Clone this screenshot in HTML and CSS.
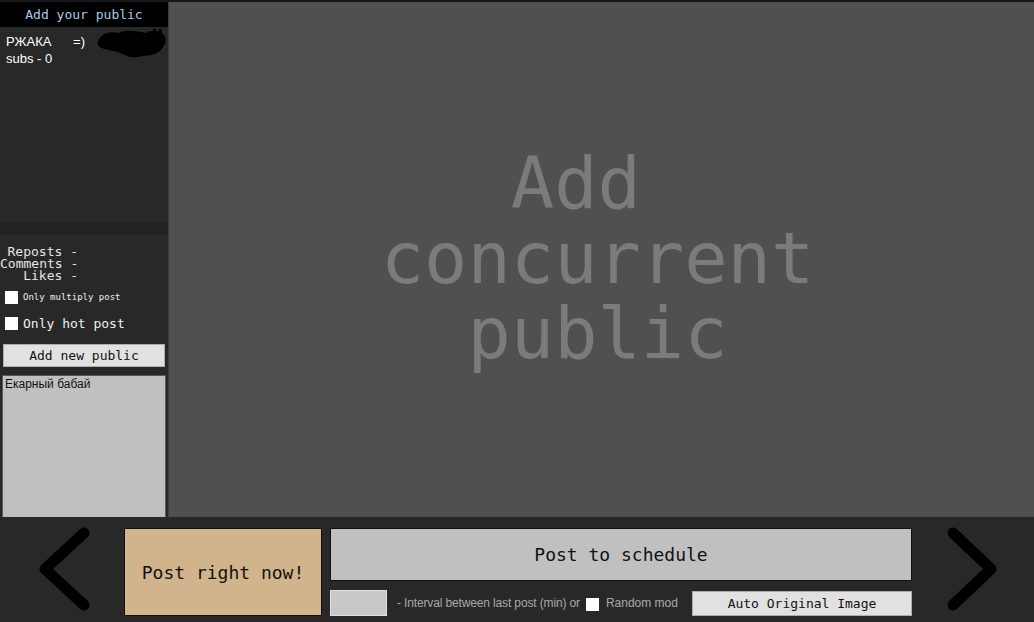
FILE: index.html
```html
<!DOCTYPE html>
<html>
<head>
<meta charset="utf-8">
<link rel="stylesheet" href="styles.css">
</head>
<body>
<div class="app">
  <div class="top">
    <aside class="sidebar">
      <div class="side-head">Add your public</div>
      <div class="publics">
        <div class="pub-item">
          <div class="pub-name">РЖАКА&nbsp;&nbsp;&nbsp;&nbsp;&nbsp;&nbsp;=)</div>
          <div class="pub-subs">subs - 0</div>
          <svg class="scribble" width="74" height="32" viewBox="0 0 74 32">
            <path d="M4 14 C8 6 16 4 24 6 C32 2 44 4 52 6 C58 2 66 4 70 8 C74 14 70 20 66 24 C58 30 50 28 44 30 C36 32 28 26 20 24 C12 22 2 22 4 14 Z" fill="#000"/>
            <path d="M60 2 L64 10 M66 2 L68 12" stroke="#000" stroke-width="3"/>
          </svg>
        </div>
      </div>
      <div class="side-band"></div>
      <div class="side-controls">
        <div class="stats">
          <div>Reposts -</div>
          <div>Comments -</div>
          <div>Likes -</div>
        </div>
        <label class="check small"><span class="box"></span>Only multiply post</label>
        <label class="check"><span class="box"></span>Only hot post</label>
        <button class="btn add-btn">Add new public</button>
        <div class="listbox">Екарный бабай</div>
      </div>
    </aside>
    <main class="main">
      <div class="placeholder"><span class="ph-line">Add </span><span class="ph-line">concurrent</span><span class="ph-line">public</span></div>
    </main>
  </div>
  <div class="bottom">
    <div class="arrow-area left">
      <svg width="60" height="92" viewBox="0 0 60 92"><path d="M49 7 L10 43 L49 79" fill="none" stroke="#000" stroke-width="11" stroke-linecap="round" stroke-linejoin="round"/></svg>
    </div>
    <button class="btn post-now">Post right now!</button>
    <div class="schedule">
      <button class="btn post-sched">Post to schedule</button>
      <div class="sched-row">
        <div class="interval-input"></div>
        <span class="hint">- Interval between last post (min) or</span>
        <span class="box white"></span>
        <span class="hint rand">Random mod</span>
        <button class="btn auto-btn">Auto Original Image</button>
      </div>
    </div>
    <div class="arrow-area right">
      <svg width="60" height="92" viewBox="0 0 60 92"><path d="M10 7 L48 43 L10 79" fill="none" stroke="#000" stroke-width="11" stroke-linecap="round" stroke-linejoin="round"/></svg>
    </div>
  </div>
</div>
</body>
</html>
```
FILE: styles.css
```css
* { box-sizing: border-box; }
html, body { margin: 0; padding: 0; }
body {
  background: #282828;
  width: 1034px;
  height: 622px;
  overflow: hidden;
  font-family: "DejaVu Sans Mono", monospace;
}
.app { display: flex; flex-direction: column; height: 622px; }
.top {
  display: flex;
  height: 517px;
  border-top: 2px solid #14181c;
}
.sidebar {
  width: 168px;
  display: flex;
  flex-direction: column;
  background: #282828;
}
.side-head {
  height: 25px;
  background: #000;
  color: #a8cce6;
  font-size: 13px;
  line-height: 25px;
  text-align: center;
}
.publics { height: 195px; position: relative; }
.pub-item {
  position: relative;
  padding: 6px 6px 0;
  font-family: "Liberation Sans", Arial, sans-serif;
  color: #fff;
  font-size: 13px;
  line-height: 17px;
}
.scribble { position: absolute; left: 94px; top: 0px; }
.side-band { height: 13px; background: #222; }
.side-controls { flex: 1; display: flex; flex-direction: column; padding-top: 11px; }
.stats {
  width: 78px;
  text-align: right;
  color: #e6e6e6;
  font-size: 13px;
  line-height: 12px;
  white-space: nowrap;
}
.check {
  display: flex;
  align-items: center;
  color: #f0f0f0;
  font-size: 13px;
  padding-left: 5px;
  height: 14px;
}
.check.small { font-size: 9px; margin-top: 8px; }
.check:not(.small) { margin-top: 12px; }
.box {
  display: inline-block;
  width: 13px;
  height: 13px;
  background: #fff;
  margin-right: 5px;
  flex: none;
}
.btn {
  font-family: "DejaVu Sans Mono", monospace;
  color: #111;
  padding: 0;
  margin: 0;
}
.add-btn {
  margin: 14px 0 0 3px;
  width: 162px;
  height: 23px;
  background: #e1e1e1;
  border: 1px solid #adadad;
  font-size: 13px;
}
.listbox {
  margin: 8px 0 0 2px;
  width: 164px;
  flex: 1;
  background: #c0c0c0;
  border: 1px solid #5a5a5a;
  border-bottom: none;
  font-family: "Liberation Sans", Arial, sans-serif;
  font-size: 12px;
  color: #111;
  padding: 1px 2px;
  line-height: 14px;
}
.main {
  flex: 1;
  background: #505050;
  border-left: 1px solid #3c3c3c;
  display: flex;
  align-items: center;
  justify-content: center;
}
.placeholder {
  color: #7b7b7b;
  font-size: 72px;
  line-height: 75px;
  text-align: center;
  margin: -3px 8px 0 0;
  display: flex;
  flex-direction: column;
  align-items: center;
}
.ph-line { white-space: pre; display: block; }
.bottom {
  flex: 1;
  display: flex;
  align-items: flex-start;
}
.arrow-area {
  display: flex;
  justify-content: center;
  padding-top: 9px;
}
.arrow-area.left { width: 124px; padding-left: 6px; }
.arrow-area.right { width: 122px; }
.post-now {
  margin-top: 11px;
  width: 198px;
  height: 88px;
  background: #d2b48c;
  border: 1px solid #111;
  font-size: 18px;
}
.schedule {
  margin: 11px 0 0 8px;
  width: 582px;
  display: flex;
  flex-direction: column;
}
.post-sched {
  height: 53px;
  width: 582px;
  background: #c0c0c0;
  border: 1px solid #111;
  font-size: 18px;
}
.sched-row {
  display: flex;
  align-items: center;
  margin-top: 9px;
  height: 26px;
}
.interval-input {
  width: 57px;
  height: 26px;
  background: #c8c8c8;
  border: 1px solid #e0e0e0;
}
.hint {
  font-family: "Liberation Sans", Arial, sans-serif;
  font-size: 12px;
  color: #a8a8a8;
  letter-spacing: -0.14px;
  margin-left: 10px;
  margin-right: 6px;
  white-space: nowrap;
}
.box.white { margin: 2px 0 0 0; }
.hint.rand { margin-left: 7px; margin-right: 0; letter-spacing: 0; }
.auto-btn {
  margin-left: auto;
  width: 220px;
  height: 25px;
  background: #e1e1e1;
  border: 1px solid #adadad;
  font-size: 13px;
}
```
